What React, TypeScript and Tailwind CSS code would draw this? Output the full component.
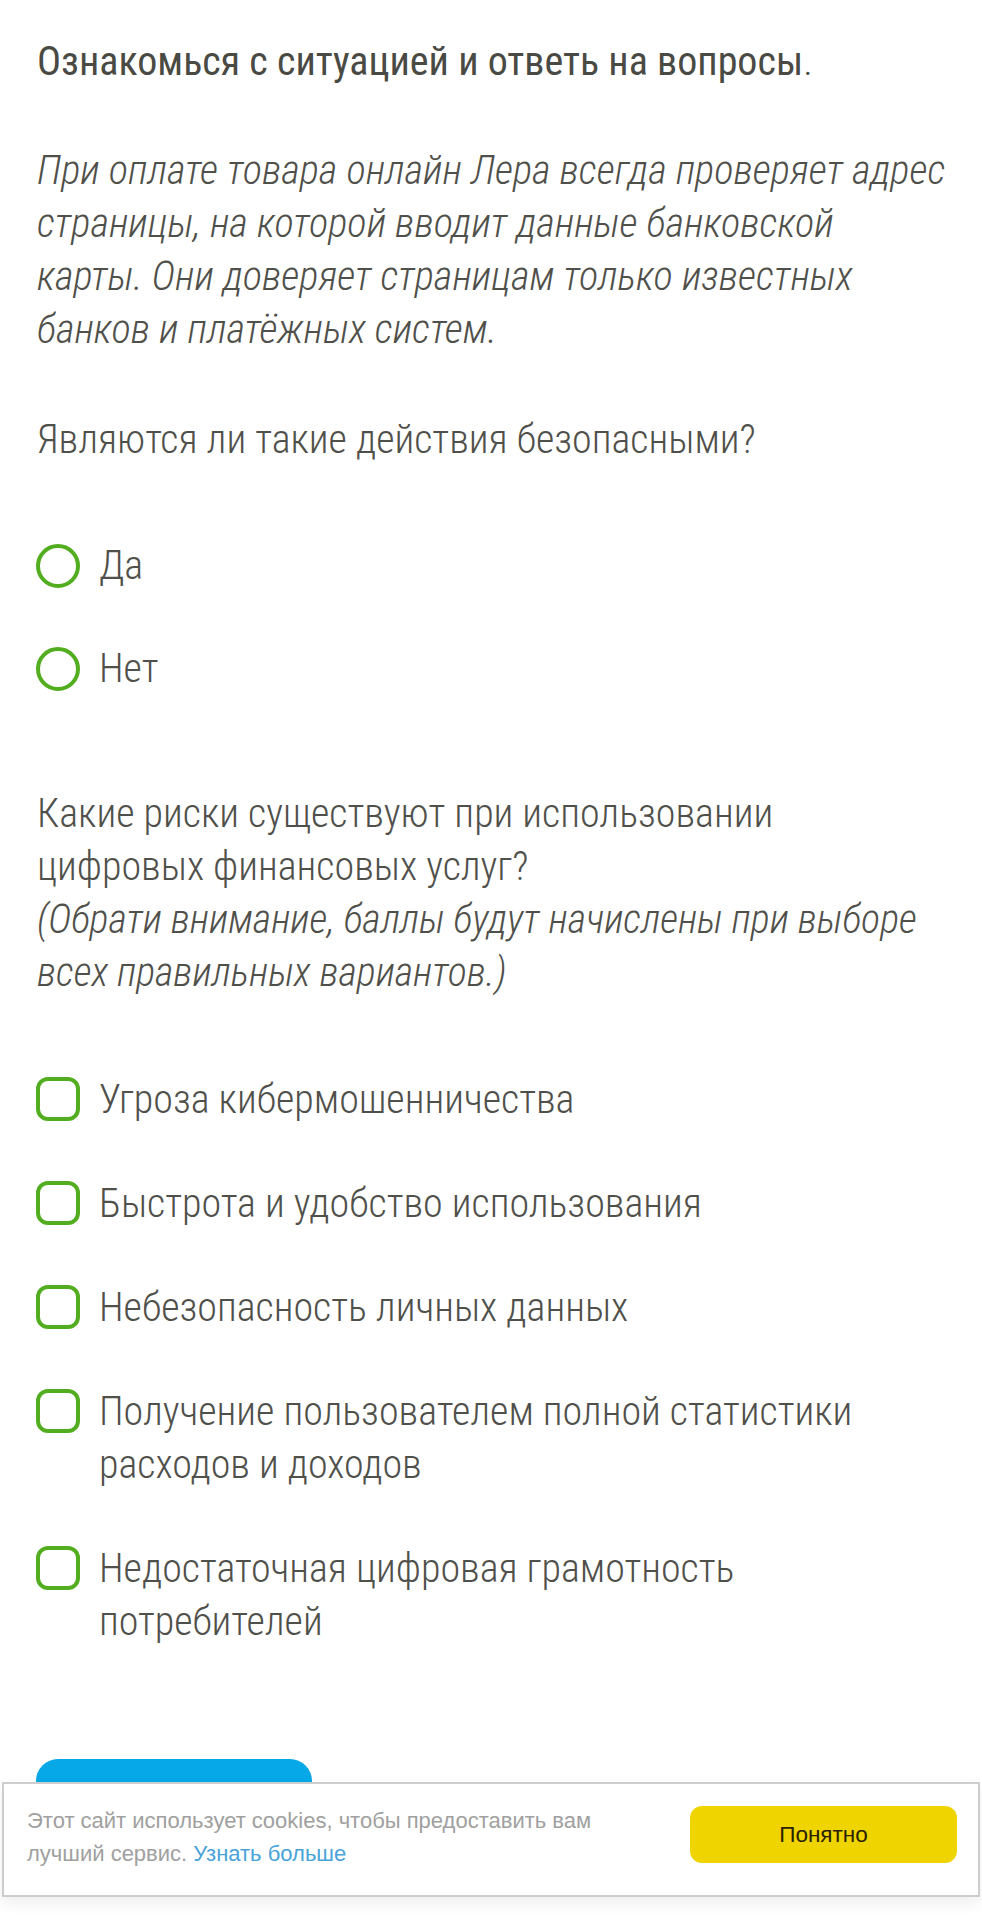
import { useState } from "react";

const font = "font-['Roboto_Condensed',Roboto,sans-serif] font-stretch-condensed";

const checks = [
  ["Угроза кибермошенничества"],
  ["Быстрота и удобство использования"],
  ["Небезопасность личных данных"],
  ["Получение пользователем полной статистики", "расходов и доходов"],
  ["Недостаточная цифровая грамотность", "потребителей"],
];

const Radio = ({ label, on, onClick }: { label: string; on: boolean; onClick: () => void }) => (
  <button onClick={onClick} className="flex items-center gap-[19px] text-left">
    <span className="w-[44px] h-[44px] rounded-full border-[4px] border-[#52ad1f] flex items-center justify-center shrink-0">
      {on && <span className="w-[18px] h-[18px] rounded-full bg-[#52ad1f]" />}
    </span>
    <span className="text-[40px] leading-[53px] font-light text-[#50504b]">{label}</span>
  </button>
);

const Check = ({ lines, on, onClick }: { lines: string[]; on: boolean; onClick: () => void }) => (
  <button onClick={onClick} className="flex items-start gap-[19px] text-left">
    <span className="mt-[4px] w-[44px] h-[44px] rounded-[12px] border-[4px] border-[#52ad1f] flex items-center justify-center shrink-0">
      {on && <span className="w-[18px] h-[18px] rounded-[4px] bg-[#52ad1f]" />}
    </span>
    <span className="text-[40px] leading-[53px] font-light text-[#50504b] whitespace-nowrap">
      {lines.map((l, i) => (
        <span key={i} className="block">{l}</span>
      ))}
    </span>
  </button>
);

export default function App() {
  const [answer, setAnswer] = useState<string | null>(null);
  const [picked, setPicked] = useState<number[]>([]);

  const toggle = (i: number) =>
    setPicked((prev) => (prev.includes(i) ? prev.filter((x) => x !== i) : [...prev, i]));

  return (
    <div className={`relative min-h-[1920px] bg-white overflow-hidden ${font}`}>
      <main className="pl-[37px] pr-[30px] pt-[35px] flex flex-col">
        <h1 className="text-[40px] leading-[53px] font-normal text-[#4a4a44] whitespace-nowrap">
          Ознакомься с ситуацией и ответь на вопросы<span className="font-light">.</span>
        </h1>

        <p className="mt-[56px] text-[40.5px] leading-[53px] font-light italic text-[#50504b] whitespace-nowrap">
          При оплате товара онлайн Лера всегда проверяет адрес
          <br />
          страницы, на которой вводит данные банковской
          <br />
          карты. Они доверяет страницам только известных
          <br />
          банков и платёжных систем.
        </p>

        <p className="mt-[57px] text-[40px] leading-[53px] font-light text-[#50504b]">
          Являются ли такие действия безопасными?
        </p>

        <div className="mt-[73px] flex flex-col gap-[50px] -ml-px">
          <Radio label="Да" on={answer === "yes"} onClick={() => setAnswer("yes")} />
          <Radio label="Нет" on={answer === "no"} onClick={() => setAnswer("no")} />
        </div>

        <p className="mt-[92px] text-[40px] leading-[53px] font-light text-[#50504b] whitespace-nowrap">
          Какие риски существуют при использовании
          <br />
          цифровых финансовых услуг?
          <br />
          <span className="italic">
            (Обрати внимание, баллы будут начислены при выборе
            <br />
            всех правильных вариантов.)
          </span>
        </p>

        <div className="mt-[74px] flex flex-col gap-[51px] -ml-px">
          {checks.map((lines, i) => (
            <Check key={i} lines={lines} on={picked.includes(i)} onClick={() => toggle(i)} />
          ))}
        </div>

        <button className="mt-[111px] -ml-px w-[276px] h-[70px] rounded-[22px] bg-[#06a8e8] text-white text-[30px]">
          Ответить
        </button>
      </main>

      {/* cookie bar */}
      <div className="absolute left-[2px] right-[2px] bottom-[23px] h-[115px] bg-white border-2 border-[#cdcdcd] shadow-[0_6px_14px_rgba(0,0,0,0.07)] flex items-center justify-between pl-[23px] pr-[21px] font-['Liberation_Sans',Arial,sans-serif] font-stretch-normal">
        <p className="text-[22px] leading-[33px] text-[#a0a0a0] -mt-[6px]">
          Этот сайт использует cookies, чтобы предоставить вам
          <br />
          лучший сервис. <a className="text-[#48a3da]">Узнать больше</a>
        </p>
        <button className="w-[267px] h-[57px] rounded-[12px] bg-[#efd400] text-[22.5px] text-[#2a2200] -mt-[10px]">
          Понятно
        </button>
      </div>
    </div>
  );
}
